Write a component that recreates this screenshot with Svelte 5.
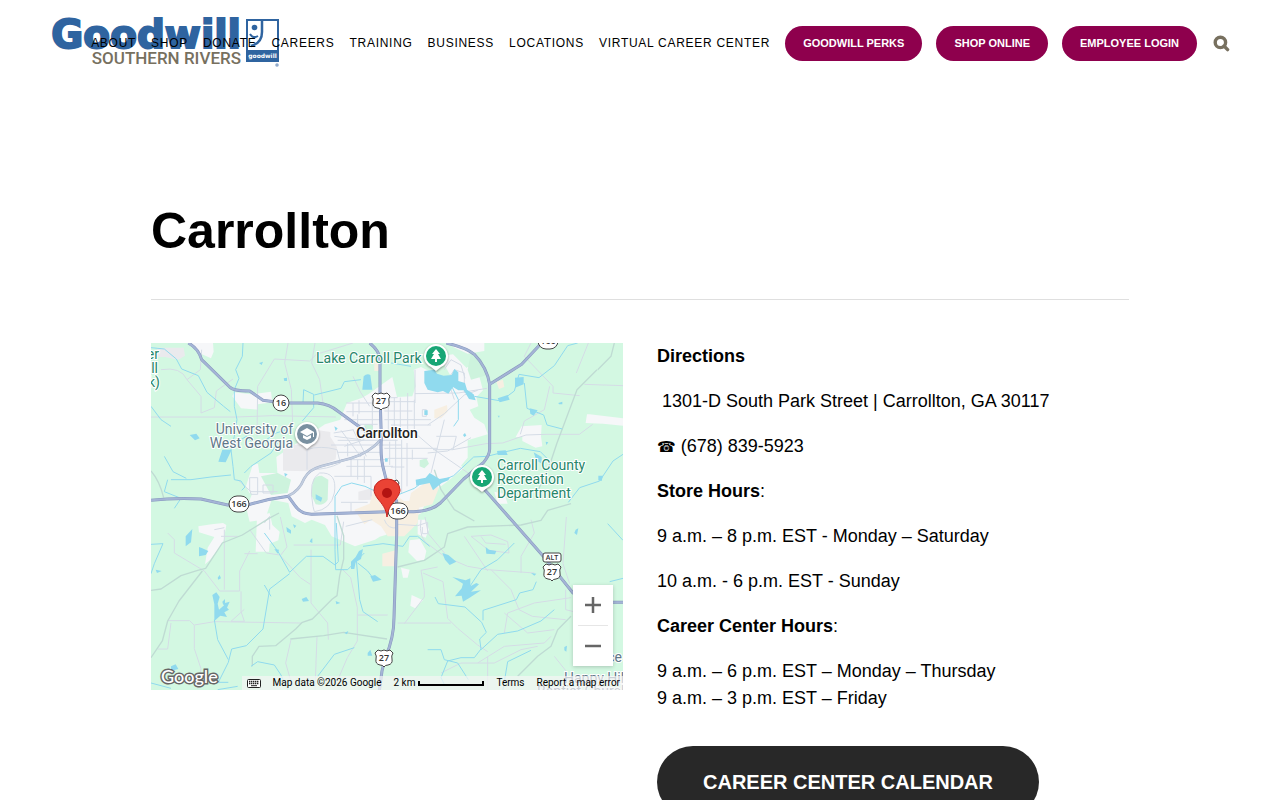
<script lang="ts">
    const menu = ["About", "Shop", "Donate", "Careers", "Training", "Business", "Locations", "Virtual Career Center"];
    const actions = ["Goodwill Perks", "Shop Online", "Employee Login"];

    /** Terrain is drawn on a 1416 x 1041 grid, three units to a map pixel */
    const urban = [
        "M118 0h68l2 26-8 20-44-20z",
        "M244 160l6-12 50 6 60-8 4 32-44 6 0 16-50-4z",
        "M522 244l46-14 10-26 10-24 46-16 20-12 70-50 14 60 46-2 10-30-6-50 22-8 60 30 60-10 20-20 30 10 16 60-20 20 6 28-26 10 14 24 30 20 10 30-60 18 0 52-20 24 8 8-50 40-40 30-6 30-20 4-10 30-60 30-80 50-60 20-70-30-20-34-40-16-20 10-40-20-10-40-50-10-20 60-46 6-10-40 24-60 20-14 50-20-4-60z",
        "M900 0h100l0 24-50 8-44-20z",
        "M866 40l40-6 50 50-20 20-40-10z",
        "M1112 250l60-4-2 34 4 30-20 4-40-20 0-12-20 0z",
        "M1308 214l8 0 100 12v22l-60-6-52-2z",
        "M142 550l40-6 34-4 10 6-8 46-14 24-28 36-14 12 8-50 20-32-46-14z",
        "M318 520l38-10 8 36 22 20-4 26-26 10-2 24h-40z",
        "M654 540l60-10 20 22-30 24-50 14z",
        "M776 592l30-4 20 36-6 26-22 4-26-26z",
        "M800 530l24 0 10 30-10 24-24-10z",
        "M782 756l34 16-24 24-14-8z",
        "M750 674l26 6-6 24-14 0z",
        "M285 430l20-64 16-4 4 28 50 0-14 20 4 40-30 10-40-10z",
        "M416 390l60-6 50 14 30 20-6 40-60-50-36 54-40-6z",
        "M1030 446l30 6 10 30-30 0z",
    ];
    const campus = ["M396 305h62l40-44 40 6 0 14 20 32-4 36-60 26-16 10-82-2z", "M18 14h80l4 24-20 12-40-8-24 0z", "M622 446l40-10 0 34-40 2z"];
    const parks = [
        "M486 412q6-14 26-14l20 12-2 60q-12 20-36 14l-14-30z",
        "M640 244h26v18h-26z",
        "M806 352l20-6 8 16-14 14-14-6z",
        "M330 400l50-10 40 20-10 40-50 6z",
        "M960 30l30 16 20 50-50 14-10-30z",
    ];
    const sand = [
        "M610 500l46-18 10-34 40-50 36 20-4 40 20 16 30 0 16 20-4 46-20 20-20 20-50 0-20-30-30-20-20 14z",
        "M780 450l50-36 34 20-20 50-40 10-30-16z",
        "M694 632l40-10-2 48h-38z",
        "M1036 116l20-6 4 22-16 6z",
        "M850 200l38-14 2 20-20 20-20 0z",
        "M670 50l14 0v34h-14z",
    ];
    const streets = [
        "M0 222h110l145 0 110-4 190 4", "M318 280l2-150 50-82 106 6 20-20 110-34", "M425 240l-4-100-20-80 10-60",
        "M30 80q60-10 78 30l42 50 0 50 40-16 6-50 50-36", "M108 110l40-30 4-60",
        "M516 180l-10-70-24-50 10-60", "M606 100q20 50 50 90",
        "M586 180h100M586 206h100M580 230h110M620 214v30h60M700 176h90M700 204h84M700 230h140M720 246h120M700 164h40",
        "M560 292h180M540 306h210M560 328h130M570 350h140M586 370h140M550 400h110M700 316h160M710 346h120M720 372h40",
        "M606 180v40M624 172v40M644 250v30M664 170v80M712 176v110M730 164v120M748 164v120M770 150v120M790 170v90",
        "M716 296v70M734 290v120M752 290v160M768 300v130M784 320v30M620 350v60M640 340v80M600 350v50M660 400v60",
        "M548 270l60-10M550 280l80 10M580 310l60-20M570 262l60 80M606 260l40 80M590 300l0 40",
        "M792 80v100M792 152l130-2 86-14M826 200v20h-12v-20z",
        "M780 260l70 60 110 76", "M830 330l60-6 70-40", "M830 246l50-34 60-56 40-14", "M880 230l-40 160M856 280l60 0-10 40-60 0",
        "M910 170l-20-60 20-30 30 10 0 60M880 80l20-30 30 16 12 40",
        "M905 320l100-18 50-2 70-24 60-2 100 0 40-30",
        "M1140 0l-20 40 86 90 0 20 80 8M1312 0l-36 90M1300 124l116 4", "M1196 130l-16 70-60 34-12 40",
        "M468 380v-60q40-14 90 0l10 40q-40 20-88 20",
        "M296 440v-36h24v50h-20zM336 426h30v24h-30z",
        "M486 490q-16-80 20-100 54-4 44 60-10 50-60 56z", "M260 410l40 36 80 0",
        "M570 478h80M600 480v30M584 550l80-20", "M700 530q10 30 40 24M740 544l60 4 30-10v34h-16v-20",
        "M50 570l20 20 0 40 90 54 46 60 60 0 0-60 30-60", "M220 560v180M60 840l-10 78H20M50 833l66 0 14 14 0 70 20 60-10 60",
        "M130 846l60-10 260 4M480 620v160l50 60 2 50", "M190 560l30-6M210 580h50",
        "M270 745l0 60 10 30-40 0 40-36", "M280 632h40M388 522l20 90-20 26 60 66 30 20",
        "M428 606l140 0 10-70", "M340 540l16-20v40M296 560l50 70 40 6",
        "M575 680l24 24 20 90 0 100-30 50-30 70", "M420 890l-16 70 20 70M498 880l-6 160", "M620 816h90M740 840h160",
        "M810 530q-10 60 30 80l40 30 70 30 60 10 140 10", "M822 522l10 50 50 60",
        "M760 842l60-80 0-20-10-60 50-10", "M816 690l60 26 14 110 30 30 60 50 30 20",
        "M1020 680l60 60 24 60 40 20 100 10", "M1110 690v-50l40-70-10-40", "M960 580l60-4 50 20 4 34-60-8z",
        "M940 580l70 104M990 580l14 20 60 4", "M1060 870l10-60 80-30 110-16M1060 810l70 60 80-10",
        "M980 960l80-50 120-10 20-20", "M870 990l60-30 100 0 80-40 50-10", "M1246 522l-10 140 20 60", "M1244 740v60l40 10",
        "M1210 940l40 50-16 50M1010 940v100",
    ];
    const mainRoads = [
        "M0 742l30-4 60-40 50-16 24-6 50-76 60-24 80-50 30-16",
        "M154 684l-70 90-34 60-16 60-34 50", "M304 970l0-30 20-30 50-2 60-50 20-20 30-10 60-60 14-10 8-60 12-50 0-70-20-60",
        "M418 888l100-10 60-10 130 20", "M740 672l80-20 60-40 10-40 60-20 160-6 60-14 20-30 70-20",
        "M1100 1000l60-60 40-30 20-50 40-40", "M1340 80l40-40 10-40M1338 80l-60 60-60 160-20 60-40 90",
        "M0 384q26 30 38 80", "M850 380l20 60 40 60 60 34",
    ];
    const streams = [
        "M0 14l40 4 36 30 16 30 50 20 26 50 50 42 20 16", "M276 0l-2 40-20 40 10 26-14 34 0 50 8 40-8 50-10 40 6 50 4 40 20 4 12 18-10 10",
        "M270 290l16-10 30 30 60-40 30-10", "M280 390l20-20 60-40 20-30",
        "M0 190l30 40 30 20", "M40 340l26 46 40 20M50 410l-10 36 50 20-20 30", "M60 410l60 0 60-8 60-6",
        "M456 180l2-40 30 14 0 40-34 40", "M554 680l-2-60 0-160 20-30 30-10 40 10 60 28", "M490 156l80-20 10-20 50-6",
        "M780 70l-60-10M902 130l20 40 0 60-14 20", "M970 160l80 14 40-30 14-50 60 10 46-36 40-60 30-8",
        "M1120 120l8 76 50 20 10 30 46 12", "M848 424l60-26 60-56 40-2 40-10 60-14 60 10 30 30",
        "M1416 334l-30 20-40 60-60 20-34 44", "M740 456l50-20 40-30",
        "M340 570l40 54 36 64 50-48 50 0 36 26 10-10-6-116",
        "M554 680l36 0 50-50M636 610l60-8 60 8 20-30 24 0 36 30",
        "M416 692l-60 46-10 60-10 60-50 50-44 10-10 40-30 60 30 0", "M190 830l10 60 32 60",
        "M616 650l10 120 10 36 44 30", "M500 1000l50-66 60-20", "M340 726l20 34", "M620 660l30 24 20 26",
        "M0 604l36-2-26 60-10 30", "M950 740l40-60 50-30 50-50",
        "M852 762l10 20 80 10 50 46 14 30-20 20 4 30-20 26-40 0-40 10-20 50 10 20", "M996 832l0-30 100-32 10-20 40-10 10-24",
        "M990 920l50-46 60-10 70-30 40-34", "M830 920l40 0 10 30 40 10 32 50",
        "M1370 542l46 50M1376 716l40-10M1140 922l-70 34-14 84", "M300 970l20-14 50 10 20 30 20 44",
        "M0 1020l60 16M200 1040l60-10",
    ];
    const lakes = [
        "M820 84l30-4 8 12 20 6 24-2 8-18 12 10 0 26 20 6 6 20 20 14 6 18-20-4-16-26-16 0-16-10-14 20-16-8-16 4-30-8-10-20z",
        "M638 100q10-10 20-4l6 44-30 0z",
        "M214 320l28 0-18 38-22-2z", "M116 276l20-4 10 14-14 6z",
        "M794 410l30-6 12-14 30 18 32-6-6 10-20 8-26 22-10-22-40 8z",
        "M1038 324l26-2 6 14-30 0zM1092 104l26-2 0 22-26 10zM1136 196l24 6-12 16-10-6zM1148 328l24 14 0 20-16-10z",
        "M1342 398l14 0-4 16-10-2zM494 454l20 10-4 12-16-8z", "M1040 166l30-10 6 14-30 8z",
        "M104 580l20-22-4 40-16 12zM144 612l10 4 18 8-8 12-20 4z", "M14 680l18 4-14 6z",
        "M184 756l12-8 10 14-6 20 4 18 16-14 14 14-14 8 8 14-20-4-18 16 0-50z", "M214 776l8-8 0 12 14-4-8 18-12-10z",
        "M600 656l14-14 10-18 12-6-6 30-16 10-4 20-10 0zM658 700l14-4 20 14-26 6z", "M452 768l14-6 8 12-18 2z",
        "M406 552l14 10 0 10-12-6zM426 544l10 4-6 8zM370 618l14 2-4 12z",
        "M904 702l40 10 14-6 0 24 18-10 8 4-24 22 30-4-34 22-20 12-4-18-20 2 20-24 4-14z",
        "M874 630l18 6 24 20-20 10-14-16zM1004 612l10 8 22 4-4 10-26-2z", "M1140 690l16 2-6 6z",
        "M1274 560l8-4-4 20-8-6zM1240 912l8-4-2 18-6-4zM650 930l8-10 6 18-14 0zM60 970l14-6 8 14-22 6z",
        "M550 250l10 6-6 8zM398 106l10-2 0 10-8 0zM324 60l12-4-4 10zM1222 180l12-4 0 8-10 0zM820 202h10v14h-10z",
        "M936 276l6-6 4 8-6 4zM1040 218l6 0-2 6zM400 390l10 4-8 8zM200 704l6-8 4 10-8 4zM702 346h8v10h-8z",
        "M580 870l12-6-4 10zM554 774l14 6-12 4zM480 588l4-2 0 14-8-4zM1184 296l8 2-6 8z",
    ];
    const highways = [
        "M112 0q30 16 40 50l84 82q10 12 60 12l40 28 60 8h104q36 4 60 24l96 70",
        "M656 0q30 24 31 50v104l4 130q-4 60 8 100 10 50 38 90l0 100-8 250q0 60-26 120l-10 40-8 60",
        "M412 460l20 28q16 24 50 26l226-8h80q50 0 80-26l70-72 60-50q18-22 18-40V124q-8-50-46-90-24-20-84-34",
        "M1016 124l96-60 54-58", "M996 434l190 216 80 100 60 28h90",
        "M0 472q70-8 150-4l80 18h60q60-18 122-26",
    ];
    const collegeRoad = "M690 290q-36 40-90 56l-90 24q-36 10-50 36-16 40-48 52";
    const routes = [[130, 60, "16"], [88, 161, "166"], [247, 168, "166"], [397, -2, "166"]];
    const shields = [[230, 58], [233, 315], [401, 229]];
</script>

<header>
    <a class="logo" href="#home" aria-label="Goodwill Southern Rivers">
        <span class="words">
            <span class="name">Goodwill</span>
            <span class="region">SOUTHERN RIVERS</span>
        </span>
        <svg width="34" height="49" viewBox="0 0 34 49" aria-hidden="true">
            <path d="M0 0h33v43H0z" fill="#2f64a0" />
            <path d="M2 2h29v29H2z" fill="#fff" />
            <path d="M16 2v11q0 11-11 14" fill="none" stroke="#2f64a0" stroke-width="2.5" />
            <path d="M4 15q3 5 8 2" fill="none" stroke="#2f64a0" stroke-width="2" />
            <circle cx="8.5" cy="8.5" r="2.8" fill="#2f64a0" />
            <text x="16.5" y="39" text-anchor="middle" font-family="DejaVu Sans" font-weight="bold" font-size="6" fill="#fff">goodwill</text>
            <circle cx="31" cy="46" r="1.5" fill="#7f9fc6" stroke="#b9c9de" />
        </svg>
    </a>
    <nav>
        {#each menu as item}
            <a href="#{item}">{item}</a>
        {/each}
    </nav>
    <div class="actions">
        {#each actions as action}
            <a href="#{action}">{action}</a>
        {/each}
    </div>
    <button class="search" aria-label="Search">
        <svg width="17" height="17" viewBox="0 0 17 17" fill="none" stroke="#77705f" stroke-width="3.4">
            <circle cx="7.4" cy="7.4" r="5.2" />
            <path d="M11 11l3.6 3.6" stroke-linecap="round" />
        </svg>
    </button>
</header>

<main>
    <h1>Carrollton</h1>
    <div class="columns">
        <section class="map" aria-label="Map of Carrollton">
            <svg class="terrain" viewBox="0 0 472 347" preserveAspectRatio="xMidYMid slice">
                <rect width="472" height="347" fill="#d3f8e2" />
                <g transform="scale(0.33333)" stroke-linejoin="round">
                    <path d={urban.join("")} fill="#f6f7f9" />
                    <path d={campus.join("")} fill="#eaeaed" />
                    <path d={parks.join("")} fill="#cdf3dd" />
                    <path d={sand.join("")} fill="#f7efe2" />
                    <g fill="none">
                        <path d={streets.join("")} stroke="#d5dce6" stroke-width="3" />
                        <path d={mainRoads.join("")} stroke="#bfdbd3" stroke-width="4" />
                        <path d={streams.join("")} stroke="#90daee" stroke-width="3" />
                    </g>
                    <path d={lakes.join("")} fill="#90daee" />
                    <g fill="none">
                        <path d={collegeRoad} stroke="#a3b1c9" stroke-width="8" />
                        <path d={collegeRoad} stroke="#c2cddf" stroke-width="5" />
                        <path d={highways.join("")} stroke="#8797bd" stroke-width="9" />
                        <path d={highways.join("")} stroke="#a4b4d6" stroke-width="6" />
                    </g>
                </g>

                {#each routes as [x, y, label]}
                    <g transform="translate({x} {y})" class="route">
                        <rect x={label === "16" ? -8 : -10} y="-8" width={label === "16" ? 16 : 20} height="16" rx="8" />
                        <text y="3">{label}</text>
                    </g>
                {/each}
                {#each shields as [x, y]}
                    <g transform="translate({x} {y})" class="route">
                        <path d="M-6-8q3 2 6 0 3 2 6 0l3 3q-2 3-1 6 1 5-4 6-3 0-4 2-1-2-4-2-5-1-4-6 1-3-1-6z" />
                        <text y="3">27</text>
                    </g>
                {/each}
                <g transform="translate(240 143)" class="route">
                    <path d="M-6-6q3 2 6 0 3 2 6 0l2 3-2 5h-12l-2-5z" />
                </g>
                <g transform="translate(401 215)" class="route">
                    <rect x="-9" y="-5" width="18" height="9" rx="2" />
                    <text class="alt" y="2">ALT</text>
                </g>

                <g class="place park">
                    <text x="165" y="20">Lake Carroll Park</text>
                    <text x="346" y="127">Carroll County</text>
                    <text x="346" y="141">Recreation</text>
                    <text x="346" y="155">Department</text>
                    <text x="8" y="16" text-anchor="end">er</text>
                    <text x="7" y="30" text-anchor="end">ll</text>
                    <text x="9" y="44" text-anchor="end">k)</text>
                </g>
                <g class="place school">
                    <text x="142" y="91" text-anchor="end">University of</text>
                    <text x="142" y="105" text-anchor="end">West Georgia</text>
                    <text x="471" y="319" text-anchor="end">ce</text>
                    <text x="413" y="340">Happy Hill</text>
                    <text x="386" y="353">Baptist Church</text>
                </g>
                <text class="city" x="236" y="95" text-anchor="middle">Carrollton</text>

                {#each [[285, 13], [331, 134]] as [x, y]}
                    <g transform="translate({x} {y})">
                        <path class="pin" d="M0 15l-5-4A12 12 0 1 1 5 11z" />
                        <circle r="10" fill="#18a675" />
                        <path d="M0-7l4 5H2l3 5H1v3h-2V3h-4l3-5h-2z" fill="#fff" />
                    </g>
                {/each}
                <g transform="translate(156 91)">
                    <path class="pin" d="M0 15l-5-4A12 12 0 1 1 5 11z" />
                    <circle r="10" fill="#7990a0" />
                    <path d="M0-6l7 4-7 4-7-4zM-4 1l4 2 4-2v3l-4 2-4-2zM6-2h1v5H6z" fill="#fff" />
                </g>
                <path
                    d="M236 174c-1-9-5-13-9-18-3-4-4-7-4-9a13 11 0 0 1 26 0c0 2-1 5-4 9-4 5-8 9-9 18z"
                    fill="#ea4335"
                    stroke="#c5221f"
                />
                <circle cx="236" cy="150" r="5" fill="#b31412" />
            </svg>

            <div class="zoom">
                <button aria-label="Zoom in">
                    <svg width="18" height="18" viewBox="0 0 18 18"><path d="M1 9h16M9 1v16" /></svg>
                </button>
                <button aria-label="Zoom out">
                    <svg width="18" height="18" viewBox="0 0 18 18"><path d="M1 9h16" /></svg>
                </button>
            </div>
            <span class="google">Google</span>
            <div class="credits">
                <button class="keys" aria-label="Keyboard shortcuts">
                    <svg width="14" height="9" viewBox="0 0 14 9">
                        <rect x="0.5" y="0.5" width="13" height="8" rx="1" fill="#fff" stroke="#222" />
                        <path d="M2 2.5h10M2 4.5h10" stroke="#222" stroke-width="1.4" stroke-dasharray="1.4 .6" />
                        <path d="M4 6.7h6" stroke="#222" />
                    </svg>
                </button>
                <span>Map data ©2026 Google</span>
                <span class="distance">2 km <i></i></span>
                <a href="#terms">Terms</a>
                <a href="#report">Report a map error</a>
            </div>
        </section>

        <section class="details">
            <p><strong>Directions</strong></p>
            <p>&nbsp;1301-D South Park Street | Carrollton, GA 30117</p>
            <p><span class="phone">☎</span> (678) 839-5923</p>
            <p><strong>Store Hours</strong>:</p>
            <p>9 a.m. – 8 p.m. EST - Monday – Saturday</p>
            <p>10 a.m. - 6 p.m. EST - Sunday</p>
            <p><strong>Career Center Hours</strong>:</p>
            <p>9 a.m. – 6 p.m. EST – Monday – Thursday<br />9 a.m. – 3 p.m. EST – Friday</p>
            <a class="calendar" href="#calendar">Career Center Calendar</a>
        </section>
    </div>
</main>

<style>
    :global(body) {
        margin: 0;
        background: #fff;
        color: #000;
        font-family: "Liberation Sans", Arial, sans-serif;
    }
    a {
        color: inherit;
        text-decoration: none;
    }
    button {
        padding: 0;
        border: none;
        background: none;
        cursor: pointer;
    }

    header {
        position: relative;
        display: flex;
        align-items: center;
        justify-content: flex-end;
        height: 87px;
        padding: 0 50px;
    }
    /* the menu is allowed to run over the logo on narrow windows */
    .logo {
        position: absolute;
        left: 48px;
        top: 19px;
        display: flex;
        gap: 5px;
    }
    .words {
        display: flex;
        flex-direction: column;
        align-items: flex-end;
        width: 193px;
    }
    .name {
        padding-top: 2px;
        color: #2f64a0;
        font: bold 39px/28px "DejaVu Sans", sans-serif;
        -webkit-text-stroke: 2px #2f64a0;
    }
    .region {
        color: #77705f;
        font: 500 17px/18px Roboto, sans-serif;
    }
    nav {
        position: relative;
        display: flex;
        gap: 15px;
        margin-right: 15px;
        padding-bottom: 2px;
        font-size: 12px;
        letter-spacing: 0.06em;
        text-transform: uppercase;
        white-space: nowrap;
    }
    .actions {
        display: flex;
        gap: 14px;
        margin-right: 16px;
    }
    .actions a {
        padding: 0 18px;
        border-radius: 18px;
        background: #8e004d;
        color: #fff;
        font-size: 11px;
        font-weight: bold;
        line-height: 35px;
        text-transform: uppercase;
        white-space: nowrap;
    }
    .search svg {
        display: block;
    }

    main {
        max-width: 978px;
        margin: 0 auto;
        padding: 114px 24px 60px;
    }
    h1 {
        margin: 0 0 43px;
        padding-bottom: 38px;
        border-bottom: 1px solid #dfdfdf;
        font-size: 50px;
        line-height: 60px;
    }
    .columns {
        display: grid;
        grid-template-columns: 1fr 1fr;
        align-items: start;
        gap: 34px;
    }

    .map {
        position: relative;
        overflow: hidden;
        font-family: Roboto, sans-serif;
    }
    .terrain {
        display: block;
        width: 100%;
    }
    .route rect,
    .route path {
        fill: #fff;
        stroke: #444;
    }
    .route text {
        fill: #333;
        font: 600 9px "Open Sans", sans-serif;
        text-anchor: middle;
    }
    .route .alt {
        font-size: 7px;
    }
    .place,
    .city {
        font-size: 14px;
        paint-order: stroke;
        stroke: #fff;
        stroke-width: 2px;
    }
    .park {
        fill: #26866a;
    }
    .school {
        fill: #5f7889;
    }
    .city {
        fill: #222;
        font-weight: 500;
    }
    .pin {
        fill: #fff;
        filter: drop-shadow(0 1px 1px #0006);
    }
    .zoom {
        position: absolute;
        right: 10px;
        bottom: 24px;
        width: 40px;
        background: #fff;
        box-shadow: 0 1px 4px #0003;
    }
    .zoom button {
        display: flex;
        align-items: center;
        justify-content: center;
        width: 40px;
        height: 40px;
    }
    .zoom button + button::before {
        content: "";
        position: absolute;
        top: 40px;
        left: 5px;
        right: 5px;
        border-top: 1px solid #e6e6e6;
    }
    .zoom button + button {
        margin-top: 1px;
    }
    .zoom path {
        stroke: #666;
        stroke-width: 2.5;
    }
    .google {
        position: absolute;
        left: 10px;
        bottom: 3px;
        color: #fff;
        font: 500 18px/22px Lato, sans-serif;
        paint-order: stroke;
        -webkit-text-stroke: 3px #666;
    }
    .credits {
        position: absolute;
        right: 0;
        bottom: 0;
        display: flex;
        gap: 12px;
        padding: 0 3px 0 5px;
        background: #f5f5f5b3;
        font-size: 10px;
        line-height: 14px;
        white-space: nowrap;
    }
    .keys svg {
        display: block;
    }
    .distance {
        display: flex;
        gap: 3px;
    }
    .distance i {
        align-self: center;
        width: 62px;
        height: 3px;
        border: 2px solid #000;
        border-top: none;
    }

    .details {
        font-size: 18px;
        line-height: 27px;
    }
    p {
        margin: 0 0 18px;
    }
    .phone {
        font: 15px/1 "DejaVu Sans", sans-serif;
    }
    .calendar {
        display: inline-block;
        margin-top: 16px;
        padding: 0 46px;
        border-radius: 36px;
        background: #282828;
        color: #fff;
        font-size: 20px;
        font-weight: bold;
        line-height: 72px;
        text-transform: uppercase;
    }
</style>
